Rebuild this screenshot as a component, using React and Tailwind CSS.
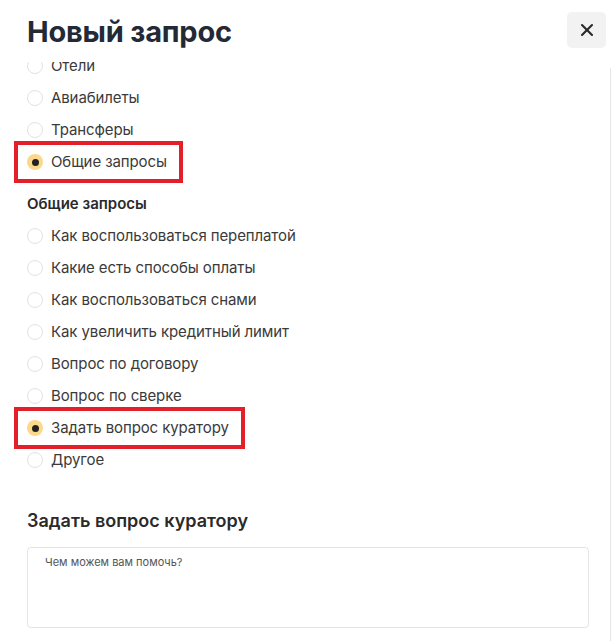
import { X } from 'lucide-react';

const travel = ['Отели', 'Авиабилеты', 'Трансферы', 'Общие запросы'];
const general = [
  'Как воспользоваться переплатой',
  'Какие есть способы оплаты',
  'Как воспользоваться снами',
  'Как увеличить кредитный лимит',
  'Вопрос по договору',
  'Вопрос по сверке',
  'Задать вопрос куратору',
  'Другое',
];

function Radio({ label, checked }) {
  const row = (
    <div className="flex items-center gap-[8px] h-[32px]">
      {checked ? (
        <span className="w-[16px] h-[16px] rounded-full bg-[#fcd88a] flex items-center justify-center">
          <span className="w-[7px] h-[7px] rounded-full bg-[#222]" />
        </span>
      ) : (
        <span className="w-[16px] h-[16px] rounded-full border border-[#e2e2e2] bg-white" />
      )}
      <span className="text-[15px] text-[#3a3a3a] tracking-[-0.1px]">{label}</span>
    </div>
  );

  if (!checked) return row;

  // red annotation frame around the picked option
  return (
    <div className="flex">
      <div className="-ml-[13px] -my-[5px] pl-[9px] pr-[12px] py-[1px] border-4 border-[#e3202a]">
        {row}
      </div>
    </div>
  );
}

export default function App() {
  return (
    <div
      className="w-[611px] h-[641px] bg-white flex flex-col overflow-hidden"
      style={{ fontFamily: 'Inter, "Noto Sans", sans-serif' }}
    >
      {/* Header */}
      <div className="h-[62px] shrink-0 flex items-start justify-between pl-[27px] pr-[5px] pt-[12px]">
        <h1 className="text-[29px] font-bold text-[#232a36] leading-[40px] tracking-[-0.2px]">
          Новый запрос
        </h1>
        <button className="w-[39px] h-[36px] rounded-[5px] bg-[#f2f2f2] flex items-center justify-center text-[#2a2a2a]">
          <X size={20} strokeWidth={2.5} />
        </button>
      </div>

      {/* Scrolled body */}
      <div className="flex-1 overflow-hidden flex">
        <div className="flex-1 pl-[27px] pr-[21px] -mt-[12px]">
          {travel.map((t) => (
            <Radio key={t} label={t} checked={t === 'Общие запросы'} />
          ))}

          <div className="mt-[10px] h-[32px] flex items-center text-[15px] font-semibold text-[#2a2a2a]">
            Общие запросы
          </div>
          {general.map((t) => (
            <Radio key={t} label={t} checked={t === 'Задать вопрос куратору'} />
          ))}

          <h2 className="mt-[33px] text-[18px] font-semibold text-[#2a2a2a] leading-[24px]">
            Задать вопрос куратору
          </h2>
          <textarea
            className="mt-[14px] w-full h-[81px] border border-[#e4e4e4] rounded-[4px] px-[17px] py-[6px] text-[11px] text-[#444] placeholder:text-[#555] resize-none outline-none"
            placeholder="Чем можем вам помочь?"
          />
        </div>
        <div className="w-px mt-[6px] bg-[#e6e6e6]" />
      </div>
    </div>
  );
}
